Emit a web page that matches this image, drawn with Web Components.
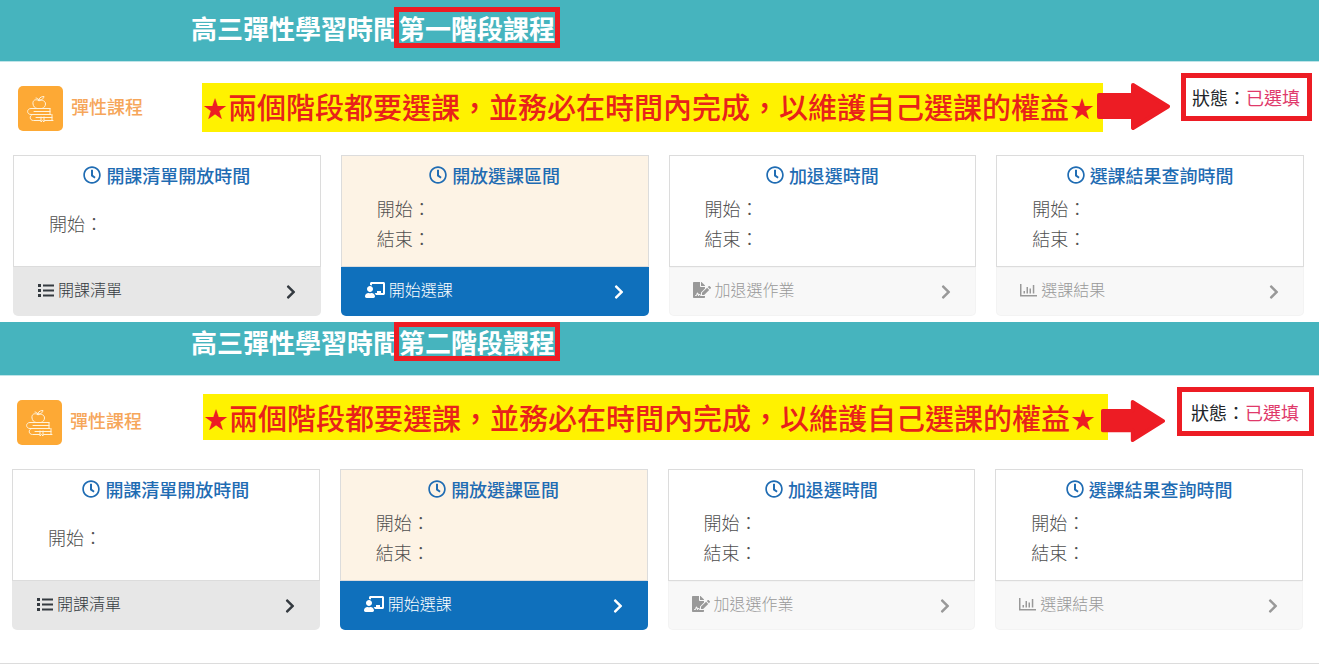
<!DOCTYPE html>
<html lang="zh-Hant">
<head>
<meta charset="utf-8">
<meta name="viewport" content="width=device-width, initial-scale=1">
<title>高三彈性學習時間</title>
<style>
  body {
    margin: 0;
    padding-right: 1px;
    background: #fff;
    font-family: "Noto Sans CJK TC", "Noto Sans", sans-serif;
  }
  course-stage.first {
    --header-height: 61px;
    --title-center: 54px;
    --mark-height: 31px;
    --brand-left: 18px;
    --brand-width: 184px;
    --banner-height: 49px;
    --banner-line: 46px;
    --banner-lift: 2px;
    --arrow-width: 73px;
    --arrow-height: 47px;
    --arrow-overlap: -6px;
    --status-gap: 11px;
    --status-width: 131px;
    --status-height: 48px;
    --status-indent: 6px;
    --row-right: 7px;
    --cards-padding: 0 15px 6px 13px;
  }
  course-stage.second {
    --header-height: 53px;
    --title-center: 39px;
    --mark-height: 29px;
    --brand-left: 17px;
    --brand-width: 186px;
    --banner-height: 46px;
    --banner-line: 46px;
    --banner-lift: 11px;
    --arrow-width: 64px;
    --arrow-height: 42px;
    --arrow-overlap: -7px;
    --status-gap: 12px;
    --status-width: 137px;
    --status-height: 49px;
    --status-indent: 9px;
    --row-right: 5px;
    --cards-padding: 0 16px 33px 12px;
    border-bottom: 1px solid #dcdcdc;
  }
</style>
</head>
<body>
<main>
  <course-stage class="first">
    <span slot="title">高三彈性學習時間</span>
    <span slot="phase">第一階段課程</span>
    <time-card heading="開課清單開放時間" rows="開始：" action="開課清單" icon="list"></time-card>
    <time-card class="open" heading="開放選課區間" rows="開始：,結束：" action="開始選課" icon="teacher"></time-card>
    <time-card class="closed" heading="加退選時間" rows="開始：,結束：" action="加退選作業" icon="sign"></time-card>
    <time-card class="closed" heading="選課結果查詢時間" rows="開始：,結束：" action="選課結果" icon="chart"></time-card>
  </course-stage>
  <course-stage class="second">
    <span slot="title">高三彈性學習時間</span>
    <span slot="phase">第二階段課程</span>
    <time-card heading="開課清單開放時間" rows="開始：" action="開課清單" icon="list"></time-card>
    <time-card class="open" heading="開放選課區間" rows="開始：,結束：" action="開始選課" icon="teacher"></time-card>
    <time-card class="closed" heading="加退選時間" rows="開始：,結束：" action="加退選作業" icon="sign"></time-card>
    <time-card class="closed" heading="選課結果查詢時間" rows="開始：,結束：" action="選課結果" icon="chart"></time-card>
  </course-stage>
</main>

<template id="stage-template">
  <style>
    :host { display: block; }
    header {
      box-sizing: border-box;
      height: calc(var(--header-height) + 1px);
      background: #46b4be;
      border-bottom: 1px solid #bfe4e8;
      padding-left: 191px;
    }
    h1 {
      margin: 0;
      display: flex;
      align-items: center;
      height: var(--title-center);
      font-size: 26px;
      font-weight: 700;
      color: #fff;
      white-space: nowrap;
    }
    mark {
      height: var(--mark-height);
      line-height: var(--mark-height);
      background: none;
      color: inherit;
      outline: 5px solid #ed1c24;
    }
    .row {
      display: flex;
      align-items: center;
      height: 93px;
      padding: 0 var(--row-right) 0 var(--brand-left);
    }
    course-brand { flex: 0 0 var(--brand-width); }
    .banner {
      flex: 1;
      min-width: 0;
      margin: 0 0 var(--banner-lift);
      height: var(--banner-height);
      line-height: var(--banner-line);
      background: #fff200;
      color: #e8221a;
      font-size: 29px;
      font-weight: 500;
      white-space: nowrap;
    }
    .star { font-family: "DejaVu Sans", sans-serif; font-weight: 400; color: #ed1c24; }
    .arrow {
      flex: none;
      width: var(--arrow-width);
      height: var(--arrow-height);
      margin: 0 0 4px var(--arrow-overlap);
      fill: #ed1c24;
      stroke: #ed1c24;
      stroke-width: 4;
      stroke-linejoin: round;
    }
    .status {
      box-sizing: border-box;
      align-self: flex-start;
      flex: none;
      width: var(--status-width);
      height: var(--status-height);
      margin: 11px 0 0 var(--status-gap);
      padding-left: var(--status-indent);
      border: 5px solid #ed1c24;
      display: flex;
      align-items: center;
      font-size: 18px;
      color: #212529;
      white-space: nowrap;
    }
    .status strong { font-weight: 400; color: #e0396b; }
    .cards {
      display: grid;
      grid-template-columns: repeat(4, 1fr);
      gap: 20px;
      padding: var(--cards-padding);
    }
  </style>
  <header><h1><slot name="title"></slot><mark><slot name="phase"></slot></mark></h1></header>
  <div class="row">
    <course-brand>彈性課程</course-brand>
    <p class="banner"><span class="star">★</span>兩個階段都要選課，並務必在時間內完成，以維護自己選課的權益<span class="star">★</span></p>
    <svg class="arrow" viewBox="0 0 73 47" preserveAspectRatio="none" aria-hidden="true"><path d="M2 12H36V2L71 23.500 36 45V34H2z"/></svg>
    <div class="status">狀態：<strong>已選填</strong></div>
  </div>
  <div class="cards"><slot></slot></div>
</template>

<template id="brand-template">
  <style>
    :host {
      display: flex;
      align-items: center;
      gap: 8px;
      font-size: 18px;
      font-weight: 500;
      color: #f6a65a;
      white-space: nowrap;
    }
    .tile {
      width: 45px;
      height: 45px;
      border-radius: 5px;
      background: #fda935;
      flex: none;
    }
    .label { margin-bottom: 6px; }
    svg { display: block; fill: none; stroke: #fff3dc; stroke-linecap: round; stroke-linejoin: round; }
  </style>
  <div class="tile">
    <svg width="45" height="45" viewBox="0 0 45 45" aria-hidden="true">
      <path d="M21 14.500c-4-2-6.500 0-6 3.500.3 2.500 2 4 4 4.500h5c2-.5 3.500-2.500 3.500-4.500 0-3-3-4.500-6.500-3.500zM20.500 14.500c0-2 2-4 5.500-4-.5 2.500-2.500 4-5.500 3M18 12c1.500 0 2.500 1 2.500 2.500"/>
      <path d="M32 22.500H13c-4.500 0-4.500 6 0 6h20M32 22.500v6M16 25.500h16M14.500 28.500c-3.500 1-3 6 1 6h7M26.500 34.500h8.500M34 28.500v6M18 31.500h16M23 31v5l1.500-1.500L26 36v-5"/>
    </svg>
  </div>
  <span class="label"><slot></slot></span>
</template>

<template id="card-template">
  <style>
    :host {
      display: block;
      min-width: 0;
      --body: #fff;
      --foot: #e7e7e7;
      --ink: #343a40;
    }
    :host(.open) { --body: #fdf3e5; --foot: #0f70bc; --ink: #fff; }
    :host(.closed) { --foot: #f8f8f8; --ink: #999; }
    .body {
      border: 1px solid #dcdcdc;
      background: var(--body);
      padding-bottom: 13px;
    }
    h2 {
      margin: 0;
      display: flex;
      align-items: center;
      justify-content: center;
      gap: 5px;
      height: 37px;
      font-size: 18px;
      font-weight: 500;
      color: #1f6cb3;
      white-space: nowrap;
    }
    .times {
      display: flex;
      flex-direction: column;
      justify-content: center;
      height: 60px;
      padding-left: 35px;
      font-size: 18px;
      font-weight: 300;
      line-height: 30px;
      color: #505050;
    }
    button {
      box-sizing: border-box;
      width: 100%;
      height: 49px;
      border: 0;
      border-radius: 0 0 5px 5px;
      padding: 0 25px 0 24px;
      display: flex;
      align-items: center;
      gap: 4px;
      background: var(--foot);
      color: var(--ink);
      font-family: inherit;
      font-size: 16px;
      font-weight: 300;
      text-align: left;
    }
    :host(.closed) button { box-shadow: inset 0 0 0 1px #f3f3f3; }
    .text { flex: 1; margin-bottom: 5px; }
    .icon { margin-bottom: 4px; }
    svg { fill: currentColor; flex: none; display: block; }
  </style>
  <div class="body">
    <h2>
      <svg width="18" height="18" viewBox="0 0 512 512" aria-hidden="true"><path d="M256 8C119 8 8 119 8 256s111 248 248 248 248-111 248-248S393 8 256 8zm0 448c-110.500 0-200-89.500-200-200S145.500 56 256 56s200 89.500 200 200-89.500 200-200 200zm61.800-104.400l-84.900-61.700c-3.100-2.300-4.900-5.900-4.900-9.700V116c0-6.600 5.400-12 12-12h32c6.600 0 12 5.400 12 12v141.700l66.800 48.600c5.400 3.900 6.500 11.400 2.600 16.800L334.600 349c-3.900 5.300-11.400 6.500-16.800 2.600z"/></svg>
      <span class="heading"></span>
    </h2>
    <div class="times"></div>
  </div>
  <button type="button">
    <span class="icon"></span><span class="text"></span>
    <svg width="10" height="16" viewBox="0 0 320 512" aria-hidden="true"><path d="M285.476 272.971L91.132 467.314c-9.373 9.373-24.569 9.373-33.941 0l-22.667-22.667c-9.357-9.357-9.375-24.522-.04-33.901L188.505 256 34.484 101.255c-9.335-9.379-9.317-24.544.04-33.901l22.667-22.667c9.373-9.373 24.569-9.373 33.941 0L285.475 239.030c9.373 9.372 9.373 24.568.001 33.941z"/></svg>
  </button>
</template>

<script>
  const ICONS = {
    list: '<svg width="17" height="16" viewBox="0 0 17 16" aria-hidden="true"><path d="M1 2h3v3H1zM1 7h3v3H1zM1 12h3v3H1zM6 2.500h11v2H6zM6 7.500h11v2H6zM6 12.500h11v2H6z"/></svg>',
    teacher: '<svg width="20" height="16" viewBox="0 0 640 512" aria-hidden="true"><path d="M208 352c-2.390 0-4.780.35-7.060 1.090C187.980 357.300 174.350 360 160 360c-14.350 0-27.980-2.700-40.950-6.910-2.280-.74-4.660-1.090-7.050-1.090C49.940 352-.33 402.480 0 464.620.14 490.880 21.730 512 48 512h224c26.270 0 47.860-21.120 48-47.380.33-62.140-49.940-112.620-112-112.620zm-48-32c53.020 0 96-42.980 96-96s-42.980-96-96-96-96 42.980-96 96 42.980 96 96 96zM592 0H208c-26.470 0-48 22.250-48 49.590V96c23.420 0 45.100 6.780 64 17.800V64h352v288h-64v-64H384v64h-76.240c19.100 16.690 33.120 38.730 39.690 64H592c26.470 0 48-22.250 48-49.590V49.590C640 22.250 618.470 0 592 0z"/></svg>',
    sign: '<svg width="18" height="16" viewBox="0 0 576 512" aria-hidden="true"><path d="M218.170 424.140c-2.950-5.920-8.090-6.520-10.170-6.520s-7.220.59-10.020 6.190l-7.670 15.340c-6.370 12.780-25.030 11.370-29.480-2.090L144 386.590l-10.610 31.880c-5.890 17.660-22.380 29.530-41 29.530H80c-8.840 0-16-7.160-16-16s7.160-16 16-16h12.390c4.830 0 9.110-3.080 10.640-7.660l18.190-54.640c3.300-9.810 12.440-16.410 22.780-16.410s19.480 6.590 22.770 16.410l13.880 41.640c19.750-16.190 54.060-9.700 66 14.160 1.890 3.780 5.490 5.950 9.360 6.260v-82.120l128-127.090V160H248c-13.200 0-24-10.800-24-24V0H24C10.700 0 0 10.700 0 24v464c0 13.300 10.700 24 24 24h336c13.300 0 24-10.700 24-24v-40l-128-.11c-16.120-.31-30.580-9.280-37.830-23.750zM384 121.900c0-6.300-2.500-12.400-7-16.900L279.100 7c-4.500-4.500-10.600-7-17-7H256v128h128v-6.100zm-96 225.060V416h68.990l161.680-162.780-67.880-67.880L288 346.960zm280.540-179.630l-31.870-31.870c-9.940-9.940-26.070-9.940-36.010 0l-27.250 27.250 67.880 67.880 27.250-27.250c9.950-9.940 9.950-26.070 0-36.010z"/></svg>',
    chart: '<svg width="17" height="16" viewBox="0 0 17 16" aria-hidden="true"><path d="M0 2h1.500v11H17v1.500H0zM3.500 9h1.500v2.500H3.500zM6.500 5h1.500v6.500H6.500zM9.500 6.500h1.500v5H9.500zM12.800 3h1.500v8.500h-1.500z"/></svg>'
  };

  const cloneInto = (host, id) => {
    const root = host.attachShadow({ mode: 'open' });
    root.append(document.getElementById(id).content.cloneNode(true));
    return root;
  };

  class CourseBrand extends HTMLElement {
    constructor() {
      super();
      cloneInto(this, 'brand-template');
    }
  }

  class TimeCard extends HTMLElement {
    connectedCallback() {
      if (this.shadowRoot) return;
      const root = cloneInto(this, 'card-template');
      root.querySelector('.heading').textContent = this.getAttribute('heading');
      root.querySelector('.text').textContent = this.getAttribute('action');
      root.querySelector('.icon').innerHTML = ICONS[this.getAttribute('icon')];
      const times = root.querySelector('.times');
      for (const label of this.getAttribute('rows').split(',')) {
        const row = document.createElement('div');
        row.textContent = label;
        times.append(row);
      }
    }
  }

  class CourseStage extends HTMLElement {
    constructor() {
      super();
      cloneInto(this, 'stage-template');
    }
  }

  customElements.define('course-brand', CourseBrand);
  customElements.define('time-card', TimeCard);
  customElements.define('course-stage', CourseStage);
</script>
</body>
</html>
